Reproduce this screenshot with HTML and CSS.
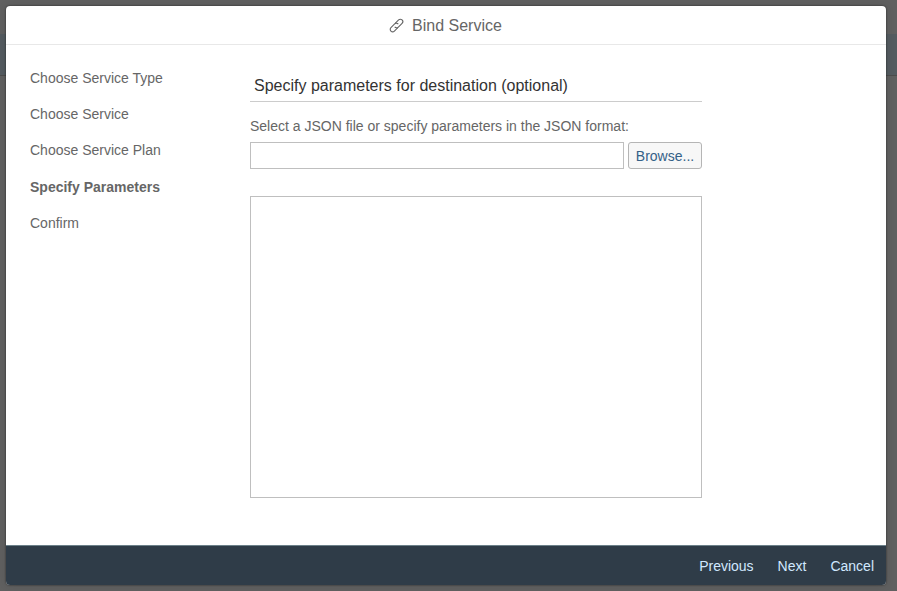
FILE: index.html
```html
<!DOCTYPE html>
<html lang="en">
<head>
<meta charset="utf-8">
<title>Bind Service</title>
<link rel="stylesheet" href="styles.css">
</head>
<body>
<div class="dialog" role="dialog" aria-labelledby="dialog-title">
  <header class="dialog-header">
    <svg class="link-icon" viewBox="0 0 16 16" aria-hidden="true">
      <g transform="rotate(-45 8 8)">
        <path d="M7.4 10.6H2.2A2.6 2.6 0 0 1 2.2 5.4H7.8A2.6 2.6 0 0 1 10.4 8.3"/>
        <path d="M8.6 5.4H13.8A2.6 2.6 0 0 1 13.8 10.6H8.2A2.6 2.6 0 0 1 5.6 7.7"/>
      </g>
    </svg>
    <h1 class="dialog-title" id="dialog-title">Bind Service</h1>
  </header>
  <main class="dialog-body">
    <ol class="steps">
      <li class="step">Choose Service Type</li>
      <li class="step">Choose Service</li>
      <li class="step">Choose Service Plan</li>
      <li class="step step-current">Specify Parameters</li>
      <li class="step">Confirm</li>
    </ol>
    <section class="content">
      <h2 class="content-title">Specify parameters for destination (optional)</h2>
      <label class="field-label" for="file">Select a JSON file or specify parameters in the JSON format:</label>
      <div class="file-row">
        <input class="file-input" id="file" type="text">
        <button class="browse" type="button">Browse...</button>
      </div>
      <textarea class="json-input" aria-label="JSON parameters"></textarea>
    </section>
  </main>
  <footer class="dialog-footer">
    <button class="action" type="button">Previous</button>
    <button class="action" type="button">Next</button>
    <button class="action" type="button">Cancel</button>
  </footer>
</div>
</body>
</html>
```
FILE: styles.css
```css
* {
  box-sizing: border-box;
}

body {
  margin: 0;
  height: 591px;
  padding: 6px 11px 6px 6px;
  overflow: hidden;
  background: linear-gradient(#606060 0 34px, #545b60 34px 75px, #4c4c4c 75px 76px, #606060 76px);
  font: 14px/20px "Liberation Sans", Arial, sans-serif;
  color: #666;
}

.dialog {
  display: flex;
  flex-direction: column;
  height: 579px;
  border-radius: 4px;
  overflow: hidden;
  background: #fff;
  box-shadow: 0 0 2px rgba(0, 0, 0, 0.6), 0 0 8px rgba(0, 0, 0, 0.12);
}

.dialog-header {
  display: flex;
  flex: 0 0 39px;
  justify-content: center;
  align-items: center;
  gap: 7px;
  padding-top: 1px;
  padding-right: 1px;
  border-bottom: 1px solid #e8e8e8;
}

.link-icon {
  width: 15px;
  height: 15px;
  margin-right: 1px;
  overflow: visible;
  fill: none;
  stroke: #666;
  stroke-width: 1.2;
}

.dialog-title {
  margin: 0;
  font-size: 16px;
  font-weight: 400;
}

.dialog-body {
  display: flex;
  flex: 1;
  padding-left: 24px;
}

.steps {
  width: 220px;
  margin: 0;
  padding: 14.9px 0 0;
  list-style: none;
}

.step {
  height: 36.25px;
  line-height: 36px;
}

.step-current {
  font-weight: 700;
}

.content {
  width: 452px;
  padding-top: 25px;
}

.content-title {
  height: 32px;
  margin: 0 0 14px;
  padding-left: 4px;
  border-bottom: 1px solid #ccc;
  color: #333;
  font-size: 16px;
  font-weight: 400;
  line-height: 31px;
}

.field-label {
  display: block;
  height: 26px;
}

.file-row {
  display: flex;
  gap: 4px;
  height: 27px;
  margin-bottom: 27px;
}

.file-input {
  width: 374px;
  height: 27px;
  border: 1px solid #bfbfbf;
  background: #fff;
  font: inherit;
}

.browse {
  flex: 1;
  padding: 0;
  border: 1px solid #b5b5b5;
  border-radius: 3px;
  background: #f7f7f7;
  color: #346187;
  font: inherit;
}

.json-input {
  display: block;
  width: 452px;
  height: 302px;
  border: 1px solid #bfbfbf;
  background: #fff;
  resize: none;
}

.dialog-footer {
  display: flex;
  flex: 0 0 40px;
  justify-content: flex-end;
  align-items: center;
  gap: 24px;
  padding-right: 12px;
  border-top: 1px solid #6c8089;
  background: #2f3c48;
}

.action {
  padding: 0;
  border: 0;
  background: none;
  color: #d1e8ff;
  font: inherit;
}
```
